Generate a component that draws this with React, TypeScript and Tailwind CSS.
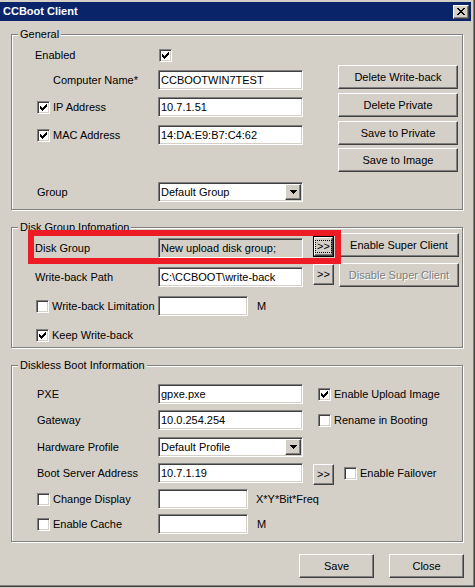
import React from 'react';

// classic 3D borders
const SUNKEN =
  'border border-t-[#808080] border-l-[#808080] border-b-white border-r-white shadow-[inset_1px_1px_0_#404040,inset_-1px_-1px_0_#d4d0c8]';
const RAISED =
  'border border-t-white border-l-white border-b-[#404040] border-r-[#404040] shadow-[inset_-1px_-1px_0_#808080,inset_1px_1px_0_#d4d0c8]';

const CHECK =
  'M6 0h1v1h-1zM5 1h2v1h-2zM0 2h1v1h-1zM4 2h3v1h-3zM0 3h2v1h-2zM3 3h3v1h-3zM0 4h5v1h-5zM1 5h3v1h-3zM2 6h1v1h-1z';
const ARROW = 'M0 0h7v1h-7zM1 1h5v1h-5zM2 2h3v1h-3zM3 3h1v1h-1z';
const CLOSE_X =
  'M0 0h2v1h-2zM6 0h2v1h-2zM1 1h2v1h-2zM5 1h2v1h-2zM2 2h4v1h-4zM3 3h2v1h-2zM2 4h4v1h-4zM1 5h2v1h-2zM5 5h2v1h-2zM0 6h2v1h-2zM6 6h2v1h-2z';

const Check = ({ checked }: { checked?: boolean }) => (
  <div className={`w-[13px] h-[13px] shrink-0 bg-white flex items-center justify-center ${SUNKEN}`}>
    {checked && (
      <svg width="7" height="7" viewBox="0 0 7 7" shapeRendering="crispEdges">
        <path d={CHECK} fill="#000" />
      </svg>
    )}
  </div>
);

const Field = ({ value = '', w = 'w-[145px]', gray }: { value?: string; w?: string; gray?: boolean }) => (
  <div
    className={`${w} h-[20px] shrink-0 flex items-center px-[2px] whitespace-nowrap overflow-hidden ${
      gray ? 'bg-[#d4d0c8]' : 'bg-white'
    } ${SUNKEN}`}
  >
    {value}
  </div>
);

const Combo = ({ value }: { value: string }) => (
  <div className={`w-[145px] h-[20px] shrink-0 flex items-center p-[1px] bg-white ${SUNKEN}`}>
    <span className="flex-1 pl-[1px] whitespace-nowrap">{value}</span>
    <div className={`w-[16px] h-[16px] bg-[#d4d0c8] flex items-center justify-center ${RAISED}`}>
      <svg width="7" height="4" viewBox="0 0 7 4" shapeRendering="crispEdges">
        <path d={ARROW} fill="#000" />
      </svg>
    </div>
  </div>
);

const Btn = ({
  children,
  className = '',
  disabled,
}: {
  children: React.ReactNode;
  className?: string;
  disabled?: boolean;
}) => (
  <div
    className={`h-[24px] shrink-0 flex items-center justify-center bg-[#d4d0c8] whitespace-nowrap ${RAISED} ${
      disabled ? 'text-[#808080] [text-shadow:1px_1px_0_#fff]' : ''
    } ${className}`}
  >
    {children}
  </div>
);

const Browse = ({ focused, className = '' }: { focused?: boolean; className?: string }) =>
  focused ? (
    <div className={`w-[21px] h-[21px] shrink-0 border border-black ${className}`}>
      <div className={`w-full h-full bg-[#d4d0c8] flex items-center justify-center ${RAISED}`}>
        <span className="border border-dotted border-black px-[1px] leading-[11px]">&gt;&gt;</span>
      </div>
    </div>
  ) : (
    <div className={`w-[21px] h-[21px] shrink-0 bg-[#d4d0c8] flex items-center justify-center ${RAISED} ${className}`}>
      &gt;&gt;
    </div>
  );

const Group = ({ title, className = '', children }: { title: string; className?: string; children: React.ReactNode }) => (
  <div className={`relative ml-[11px] w-[452px] border border-[#808080] shadow-[inset_1px_1px_0_#fff,1px_1px_0_#fff] ${className}`}>
    <span className="absolute left-[6px] top-[-7px] px-[2px] bg-[#d4d0c8] leading-[13px] whitespace-nowrap">{title}</span>
    {children}
  </div>
);

const CheckLabel = ({ checked, label, className = '' }: { checked?: boolean; label: string; className?: string }) => (
  <div className={`flex items-center gap-[3px] ${className}`}>
    <Check checked={checked} />
    <span className="whitespace-nowrap">{label}</span>
  </div>
);

export default function App() {
  return (
    <div className="w-[475px] h-[588px] bg-[#d4d0c8] text-black text-[11px] leading-none font-['Liberation_Sans',Arial,sans-serif] overflow-hidden">
      <div className="w-[475px] h-[587px] pt-[2px] border-r border-b border-r-[#404040] border-b-[#404040] shadow-[inset_-1px_-1px_0_#808080] flex flex-col">
        {/* title bar */}
        <div className="h-[19px] mr-[3px] bg-[#0a246a] flex items-center justify-between pl-[3px] pr-[2px]">
          <span className="text-white font-bold text-[11px]">CCBoot Client</span>
          <div className={`w-[16px] h-[14px] bg-[#d4d0c8] flex items-center justify-center ${RAISED}`}>
            <svg width="8" height="7" viewBox="0 0 8 7" shapeRendering="crispEdges">
              <path d={CLOSE_X} fill="#000" />
            </svg>
          </div>
        </div>

        {/* General */}
        <Group title="General" className="mt-[13px] h-[176px]">
          <div className="flex">
            <div className="w-[291px] flex flex-col">
              <div className="mt-[14px] h-[13px] flex items-center">
                <span className="w-[147px] pl-[23px]">Enabled</span>
                <Check checked />
              </div>
              <div className="mt-[8px] h-[20px] flex items-center">
                <span className="w-[146px] pl-[41px]">Computer Name*</span>
                <Field value="CCBOOTWIN7TEST" />
              </div>
              <div className="mt-[7px] h-[20px] flex items-center">
                <CheckLabel checked label="IP Address" className="w-[146px] pl-[25px]" />
                <Field value="10.7.1.51" />
              </div>
              <div className="mt-[8px] h-[20px] flex items-center">
                <CheckLabel checked label="MAC Address" className="w-[146px] pl-[25px]" />
                <Field value="14:DA:E9:B7:C4:62" />
              </div>
              <div className="mt-[37px] h-[20px] flex items-center">
                <span className="w-[146px] pl-[25px]">Group</span>
                <Combo value="Default Group" />
              </div>
            </div>
            <div className="ml-[35px] flex flex-col">
              <Btn className="mt-[30px] w-[120px]">Delete Write-back</Btn>
              <Btn className="mt-[4px] w-[120px]">Delete Private</Btn>
              <Btn className="mt-[4px] w-[120px]">Save to Private</Btn>
              <Btn className="mt-[3px] w-[120px]">Save to Image</Btn>
            </div>
          </div>
        </Group>

        {/* Disk Group */}
        <Group title="Disk Group Infomation" className="mt-[17px] h-[121px]">
          {/* annotation */}
          <div className="absolute left-[16px] top-[2px] w-[313px] h-[34px] border-[6px] border-[#ed1c24] pointer-events-none z-10" />
          <div className="mt-[5px] h-[24px] flex items-start">
            <span className="mt-[5px] h-[20px] w-[146px] pl-[23px] flex items-center">Disk Group</span>
            <div className="mt-[5px]">
              <Field value="New upload disk group;" gray />
            </div>
            <Browse focused className="mt-[3px] ml-[10px]" />
            <Btn className="ml-[5px] w-[120px]">Enable Super Client</Btn>
          </div>
          <div className="mt-[6px] h-[24px] flex items-start">
            <span className="mt-[4px] h-[20px] w-[146px] pl-[23px] flex items-center">Write-back Path</span>
            <div className="mt-[4px]">
              <Field value="C:\CCBOOT\write-back" />
            </div>
            <Browse className="mt-[1px] ml-[10px]" />
            <Btn disabled className="ml-[5px] w-[120px]">
              Disable Super Client
            </Btn>
          </div>
          <div className="mt-[9px] h-[20px] flex items-center">
            <CheckLabel label="Write-back Limitation" className="w-[146px] pl-[24px]" />
            <Field w="w-[90px]" />
            <span className="ml-[9px]">M</span>
          </div>
          <div className="mt-[13px] h-[13px] flex items-center">
            <CheckLabel checked label="Keep Write-back" className="pl-[24px]" />
          </div>
        </Group>

        {/* Diskless Boot */}
        <Group title="Diskless Boot Information" className="mt-[17px] h-[177px]">
          <div className="mt-[18px] h-[20px] flex items-center">
            <span className="w-[146px] pl-[25px]">PXE</span>
            <Field value="gpxe.pxe" />
            <CheckLabel checked label="Enable Upload Image" className="ml-[15px]" />
          </div>
          <div className="mt-[6px] h-[20px] flex items-center">
            <span className="w-[146px] pl-[25px]">Gateway</span>
            <Field value="10.0.254.254" />
            <CheckLabel label="Rename in Booting" className="ml-[15px]" />
          </div>
          <div className="mt-[7px] h-[20px] flex items-center">
            <span className="w-[146px] pl-[25px]">Hardware Profile</span>
            <Combo value="Default Profile" />
          </div>
          <div className="mt-[6px] h-[20px] flex items-center">
            <span className="w-[146px] pl-[25px]">Boot Server Address</span>
            <Field value="10.7.1.19" />
            <Browse className="ml-[10px] mt-[2px]" />
            <CheckLabel label="Enable Failover" className="ml-[10px]" />
          </div>
          <div className="mt-[6px] h-[20px] flex items-center">
            <CheckLabel label="Change Display" className="w-[146px] pl-[25px]" />
            <Field w="w-[90px]" />
            <span className="ml-[8px]">X*Y*Bit*Freq</span>
          </div>
          <div className="mt-[5px] h-[20px] flex items-center">
            <CheckLabel label="Enable Cache" className="w-[146px] pl-[25px]" />
            <Field w="w-[90px]" />
            <span className="ml-[9px]">M</span>
          </div>
        </Group>

        {/* footer */}
        <div className="mt-[12px] flex justify-end gap-[15px] pr-[10px]">
          <Btn className="w-[75px]">Save</Btn>
          <Btn className="w-[75px]">Close</Btn>
        </div>
      </div>
    </div>
  );
}
